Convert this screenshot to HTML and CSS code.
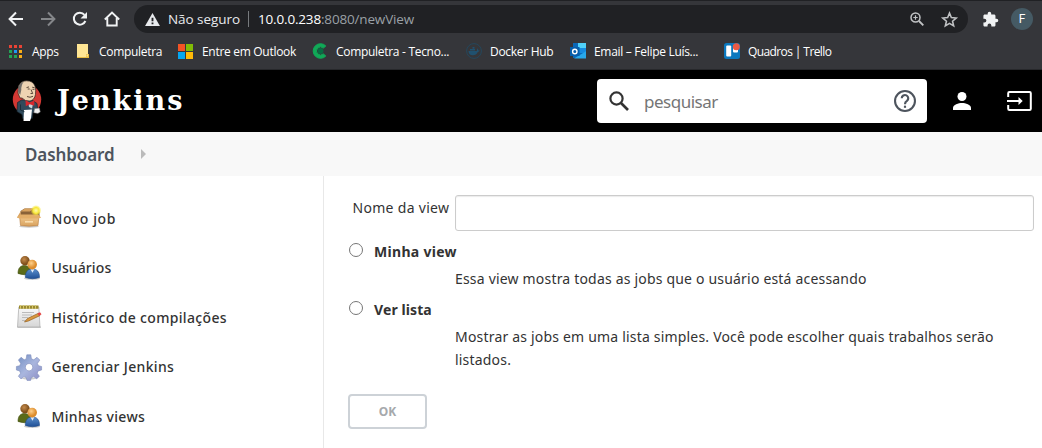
FILE: index.html
```html
<!DOCTYPE html>
<html lang="pt-BR">
<head>
<meta charset="utf-8">
<title>Jenkins</title>
<link rel="stylesheet" href="styles.css">
</head>
<body>
<svg class="defs" width="0" height="0">
  <defs>
    <linearGradient id="box" x1="0" y1="0" x2="0" y2="1"><stop offset="0" stop-color="#f3cb90"/><stop offset="1" stop-color="#d8a25f"/></linearGradient>
    <radialGradient id="sun"><stop offset="0" stop-color="#fffbb0"/><stop offset=".55" stop-color="#f8e83a"/><stop offset="1" stop-color="#f8e83a" stop-opacity="0"/></radialGradient>
    <radialGradient id="face" cx=".4" cy=".35"><stop offset="0" stop-color="#ffd08a"/><stop offset="1" stop-color="#dc8c2c"/></radialGradient>
    <radialGradient id="face2" cx=".4" cy=".35"><stop offset="0" stop-color="#c58b4c"/><stop offset="1" stop-color="#80501c"/></radialGradient>
    <linearGradient id="blue" x1="0" y1="0" x2="0" y2="1"><stop offset="0" stop-color="#5b8fcc"/><stop offset="1" stop-color="#1f4f96"/></linearGradient>
    <linearGradient id="steel" x1="0" y1="0" x2="1" y2="1"><stop offset="0" stop-color="#6f8dc0"/><stop offset=".5" stop-color="#a9b6de"/><stop offset="1" stop-color="#8c8cc4"/></linearGradient>
    <linearGradient id="paper" x1="0" y1="0" x2="0" y2="1"><stop offset="0" stop-color="#fafafa"/><stop offset="1" stop-color="#d6d6d6"/></linearGradient>
    <symbol id="people" viewBox="0 0 26 26">
      <ellipse cx="16" cy="23.500" rx="8" ry="1.300" fill="#ccc"/>
      <path d="M2 18.500c0-5.500 2.500-8 6.500-8s6.500 3 6.500 8q-6.500 2.500-13 0z" fill="#5b6b18" stroke="#3d4b0c" stroke-width=".6"/>
      <circle cx="9" cy="5.800" r="4.700" fill="url(#face2)"/>
      <path d="M9.300 22.500c0-6 2.700-8.500 7.200-8.500s7 2.800 7 8.500q-7 2.600-14.200 0z" fill="url(#blue)" stroke="#204a87" stroke-width=".6"/>
      <path d="M14.500 14.200l2 3.500 1.800-3.500z" fill="#e4eefa"/>
      <circle cx="16.200" cy="9.600" r="4.800" fill="url(#face)"/>
    </symbol>
  </defs>
</svg>

<div class="chrome">
  <div class="toolbar">
    <svg class="nav back" viewBox="0 0 16 16"><path d="M15 8H2M8 1.500L1.600 8 8 14.500" fill="none" stroke="#f1f3f4" stroke-width="2"/></svg>
    <svg class="nav forward" viewBox="0 0 16 16"><path d="M1 8h13M8 1.500L14.400 8 8 14.500" fill="none" stroke="#85878a" stroke-width="2"/></svg>
    <svg class="nav reload" viewBox="0 0 16 16"><path d="M13.400 10a6 6 0 1 1-.9-6.200" fill="none" stroke="#f1f3f4" stroke-width="2"/><path d="M15 1v6.500H8.500z" fill="#f1f3f4"/></svg>
    <svg class="nav home" viewBox="0 0 16 16"><path d="M.8 8.500L8 1.600l7.200 6.900M3.300 7v7.500h9.400V7" fill="none" stroke="#f1f3f4" stroke-width="1.900"/></svg>
    <div class="address">
      <svg class="warn" viewBox="0 0 16 14"><path d="M8 0l8 14H0z" fill="#e8eaed"/><path d="M7 5h2v4H7zM7 10.200h2v2H7z" fill="#202124"/></svg>
      <span class="insecure">Não seguro</span>
      <span class="divider"></span>
      <span class="url"><span class="host">10.0.0.238</span>:8080/newView</span>
      <svg class="magnifier" viewBox="0 0 14 14"><circle cx="5.500" cy="5.500" r="4.500" fill="none" stroke="#c0c2c4" stroke-width="1.500"/><path d="M9 9l4.300 4.300" stroke="#c0c2c4" stroke-width="1.900"/><path d="M3.300 5.500h4.400M5.500 3.300v4.400" stroke="#c0c2c4" stroke-width="1.200"/></svg>
      <svg class="star" viewBox="0 0 24 24"><path d="M12 3l2.600 6.300 6.900.6-5.200 4.500 1.600 6.700L12 17.500l-5.900 3.600 1.600-6.700-5.200-4.500 6.900-.6z" fill="none" stroke="#c0c2c4" stroke-width="2.200"/></svg>
    </div>
    <svg class="puzzle" viewBox="0 0 24 24"><path fill="#f1f3f4" d="M20.500 11H19V7c0-1.100-.9-2-2-2h-4V3.500a2.500 2.500 0 0 0-5 0V5H4c-1.100 0-2 .9-2 2v3.800h1.500a2.700 2.700 0 0 1 0 5.400H2V20c0 1.100.9 2 2 2h3.800v-1.500a2.700 2.700 0 0 1 5.400 0V22H17c1.100 0 2-.9 2-2v-4h1.500a2.500 2.500 0 0 0 0-5z"/></svg>
    <span class="avatar">F</span>
  </div>
  <nav class="bookmarks">
    <a class="bm apps"><svg viewBox="0 0 13 13"><path d="M0 0h3v3H0zM5 0h3v3H5zM10 0h3v3h-3z" fill="#ea4335"/><path d="M0 5h3v3H0zM0 10h3v3H0zM5 10h3v3H5z" fill="#23a455"/><path d="M5 5h3v3H5z" fill="#2196f3"/><path d="M10 5h3v3h-3zM10 10h3v3h-3z" fill="#fbae17"/></svg><span>Apps</span></a>
    <a class="bm folder"><svg viewBox="0 0 12 14"><path d="M0 0h11v10h1v4H0z" fill="#ffe694"/><path d="M0 13h9v-3h3v4H0z" fill="#e8bd43"/><path d="M9.500 10.500H11v2H9.500z" fill="#ffe694"/></svg><span>Compuletra</span></a>
    <a class="bm ms"><svg viewBox="0 0 15 15"><path d="M0 0h7v7H0z" fill="#f35325"/><path d="M8 0h7v7H8z" fill="#81bc06"/><path d="M0 8h7v7H0z" fill="#05a6f0"/><path d="M8 8h7v7H8z" fill="#ffba08"/></svg><span>Entre em Outlook</span></a>
    <a class="bm tecno"><svg viewBox="0 0 16 16"><path d="M13.800 3A7.300 7.300 0 1 0 13.800 13L11.300 10.900A4 4 0 1 1 11.300 5.100z" fill="#10a957" stroke="#10a957" stroke-width="1"/><circle cx="8.500" cy="8" r="3" fill="#096c42"/></svg><span>Compuletra - Tecno...</span></a>
    <a class="bm docker"><svg viewBox="0 0 16 16"><circle cx="8" cy="8" r="7.400" fill="none" stroke="#24475c"/><path d="M2.500 8h8.300q.6-2 .3-2.800 1.300.8 1.300 2.200l1.400.2q-.6 1.200-2 1.300-1.500 3.300-5 3.300-4.200 0-4.300-4.200z" fill="#20516f"/><path d="M4 6h5v1.500H4zM6.500 4h2v1.700h-2z" fill="#20516f"/></svg><span>Docker Hub</span></a>
    <a class="bm mail"><svg viewBox="0 0 16 16"><path d="M3 0h13v15H3z" fill="#0a68b8"/><path d="M8 0h8v5H8z" fill="#50d0f8"/><path d="M8 5h8v5H8z" fill="#168be0"/><path d="M4 15.500l12-7.300v7.300z" fill="#28a8ea"/><path d="M0 4h9.500v9H0z" fill="#075eaa"/><circle cx="4.800" cy="8.500" r="2.200" fill="none" stroke="#fff" stroke-width="1.400"/></svg><span>Email – Felipe Luís...</span></a>
    <a class="bm trello"><svg viewBox="0 0 16 16"><rect width="16" height="16" rx="2.500" fill="#0b78be"/><rect x="2.200" y="2.500" width="5" height="11" rx="1" fill="#fff"/><rect x="9" y="2.500" width="5" height="7" rx="1" fill="#fff"/><circle cx="12.300" cy="3.800" r="3.500" fill="#eb5a46"/></svg><span>Quadros | Trello</span></a>
  </nav>
</div>

<header class="header">
  <svg class="butler" viewBox="0 0 30 42">
    <ellipse cx="15" cy="19.500" rx="14.200" ry="15" fill="#d33833"/>
    <path d="M9.500 20L5.500 22.500 5 31.500l5 3 .7 4h9.500l.8-6 5-.7L25 23.500l-5-3.500z" fill="#304a5b" stroke="#17252e" stroke-width=".7"/>
    <path d="M8 18L6 13 6.500 6Q9 .8 14.500.8 21 .8 23 6q1.200 4 .5 8.500Q22.500 20 18 21q-5 .5-8-3z" fill="#eed3b2" stroke="#28231f" stroke-width=".7"/>
    <path d="M8.200 15L6.200 12 6.700 6Q8.500 2.500 12 1.500 9 5 9.300 10z" fill="#716d69"/>
    <path d="M15.700 9h2M20.500 9.300h2M19 9.500l1.700 4h-2.200M15 16.500q3 1.600 6-.2M14.500 7.600l2.500-.7M20.200 7.200l2.300.5" fill="none" stroke="#4a392d" stroke-width=".9"/>
    <path d="M16.500 24h4.500l-1 4.500-3-1.500z" fill="#c9d3da"/>
    <path d="M13.500 20l4 2.500 4.800-2v5.200l-4.500-1.500-4 2z" fill="#d6262c"/>
    <path d="M12 30l8-.5 -1 8.500-1 3h-6.500z" fill="#fff"/>
    <path d="M22.500 28.500l5-.5.8 4-2.500 1.500-4-.7z" fill="#eee" stroke="#555" stroke-width=".5"/>
    <path d="M8.500 24.500v5.500l4 1.700" fill="none" stroke="#172b37" stroke-width=".9"/>
  </svg>
  <span class="brand">Jenkins</span>
  <div class="search">
    <svg class="lens" viewBox="0 0 20 20"><circle cx="7.500" cy="7.500" r="6.100" fill="none" stroke="#333" stroke-width="2.200"/><path d="M12 12l7 7" stroke="#333" stroke-width="2.600"/></svg>
    <span class="placeholder">pesquisar</span>
    <svg class="help" viewBox="0 0 24 24"><circle cx="12" cy="12" r="9.200" fill="none" stroke="#4d545d" stroke-width="1.900"/><path d="M9 9.500a3 3 0 1 1 4.800 2.400Q12 13 12 15" fill="none" stroke="#4d545d" stroke-width="2"/><path d="M11 16.300h2v2h-2z" fill="#4d545d"/></svg>
  </div>
  <svg class="user" viewBox="0 0 18 18"><circle cx="9" cy="4.500" r="4.500" fill="#fff"/><path d="M0 18v-2.300C0 12.800 5.500 11 9 11s9 1.800 9 4.700V18z" fill="#fff"/></svg>
  <svg class="logout" viewBox="0 0 25 20"><path d="M1.200 6V2.200Q1.200 1 2.400 1h20.200q1.200 0 1.200 1.200v15.600q0 1.200-1.200 1.200H2.400q-1.200 0-1.200-1.200V14" fill="none" stroke="#fff" stroke-width="2"/><path d="M0 10h13" stroke="#fff" stroke-width="2"/><path d="M11.500 6l4.200 4-4.200 4z" fill="#fff"/></svg>
</header>

<div class="crumbs"><span class="crumb">Dashboard</span><span class="caret"></span></div>

<div class="content">
  <aside class="side">
    <a class="task"><svg viewBox="0 0 26 26"><ellipse cx="13" cy="21.500" rx="10" ry="1.200" fill="#ccc"/><path d="M4.500 6l4-2.500h12l3 3.500v5H4z" fill="#8a6238"/><path d="M4.500 6.500l-3.500 6h4zM4.500 6.500L9 3.500h8l-3 3z" fill="#d8a25f"/><path d="M3.500 10.500h19.500l-1 10q-9 1.400-17.500 0z" fill="url(#box)" stroke="#b5793a" stroke-width=".6"/><path d="M.8 12.500l3.500-3h17.500l3.400 3-2.800 1H3.500z" fill="#e3ae69"/><path d="M9 16.800h8" stroke="#fae0b2" stroke-width="1.500"/><circle cx="20" cy="5.500" r="5.500" fill="url(#sun)"/></svg><span class="wide">Novo job</span></a>
    <a class="task"><svg><use href="#people"/></svg><span class="snug">Usuários</span></a>
    <a class="task"><svg viewBox="0 0 26 26"><path d="M2 22.500h23v1.500H1z" fill="#ccc"/><path d="M2.800 3h20l1.200 20H1.500z" fill="url(#paper)" stroke="#aaa" stroke-width=".7"/><path d="M3 1.500h19.500v3.300H3z" fill="#9a8a2e"/><path d="M4.500 1v4M7.500 1v4M10.500 1v4M13.500 1v4M16.500 1v4M19.500 1v4" stroke="#d5c66c"/><path d="M6 8.500h12M6 11h10M6 13.500h6M6 16.500h4" stroke="#bbb"/><path d="M8.500 18l3-3.500L22.500 9.200l1.300 2.500L12.500 17z" fill="#d9983f" stroke="#865313" stroke-width=".6"/><path d="M21.500 9.500l2.500-1.200 1.500 2-2.300 1.700z" fill="#e34545"/></svg><span>Histórico de compilações</span></a>
    <a class="task"><svg viewBox="0 0 26 26"><ellipse cx="13" cy="24.300" rx="7" ry="1.200" fill="#ccc"/><path d="M10.800.8h4l.6 4 2.400 1 3.200-2.500 2.800 2.800-2.400 3.300 1 2.300 3.200.8v3.500l-3.400.9-1 2.300 2.200 3-2.700 2.700-3-2.300-2.400 1-.7 2.800h-3.600l-.7-2.800-2.300-1-3 2.300-2.600-2.700 2.200-3-1-2.300-3.200-.9v-3.500l3.300-.8 1-2.300-2.300-3.300L5.100 3.300 8.200 5.800l2-.9zM13 9.500a3.700 3.700 0 1 0 .1 0z" fill-rule="evenodd" fill="url(#steel)" stroke="#7e8cba" stroke-width=".6"/></svg><span>Gerenciar Jenkins</span></a>
    <a class="task"><svg><use href="#people"/></svg><span>Minhas views</span></a>
  </aside>
  <main class="main">
    <div class="name-row"><label class="name-label">Nome da view</label><input class="name-input" type="text"></div>
    <div class="option"><span class="radio"></span><b>Minha view</b></div>
    <p class="desc">Essa view mostra todas as jobs que o usuário está acessando</p>
    <div class="option second"><span class="radio"></span><b class="plain">Ver lista</b></div>
    <p class="desc">Mostrar as jobs em uma lista simples. Você pode escolher quais trabalhos serão<br>listados.</p>
    <button class="ok">OK</button>
  </main>
</div>
</body>
</html>
```
FILE: styles.css
```css
* { box-sizing: border-box; }
body { margin: 0; width: 1042px; height: 448px; overflow: hidden; background: #fff; color: #333; font-family: "Noto Sans", sans-serif; font-size: 14px; }
svg { display: block; flex: none; overflow: visible; }
span { white-space: nowrap; }
.defs { position: absolute; }

.chrome { height: 70px; background: #35363a; border-top: 1px solid #202124; border-bottom: 1px solid #27282b; font-family: "Open Sans", sans-serif; color: #fff; }
.toolbar { display: flex; align-items: center; height: 36px; padding-left: 8px; }
.nav { width: 16px; height: 16px; margin-right: 16px; }
.home { margin-right: 14px; }
.address { display: flex; align-items: center; width: 834px; height: 28px; padding-left: 11px; border-radius: 14px; background: #202124; font-size: 14px; }
.warn { width: 15px; height: 13px; }
.insecure { margin-left: 8px; width: 72px; color: #e8eaed; font-size: 13.500px; letter-spacing: -.05px; }
.divider { width: 1px; height: 16px; margin: 0 9px 0 8px; background: #777a7d; }
.url { color: #9aa0a6; font-size: 13.500px; letter-spacing: -.17px; flex: 1; }
.host { color: #fff; }
.magnifier { width: 14px; height: 14px; margin-right: 17px; }
.star { width: 17px; height: 17px; margin-right: 10px; }
.puzzle { width: 17px; height: 17px; margin: 0 12px 0 14px; }
.avatar { width: 22px; height: 22px; border-radius: 50%; background: #455a64; line-height: 22px; text-align: center; font-family: Roboto, sans-serif; font-size: 12px; }
.bookmarks { display: flex; height: 28px; font-size: 12px; letter-spacing: -.3px; }
.bm { display: flex; align-items: center; flex: none; gap: 8px; padding-left: 8px; }
.bm svg { width: 16px; height: 16px; }
.apps { width: 68px; padding-left: 9px; gap: 10px; }
.apps svg { width: 13px; height: 13px; }
.folder { width: 101px; padding-left: 9px; gap: 10px; }
.folder svg { width: 12px; height: 14px; }
.ms { width: 134px; padding-left: 9px; gap: 9px; }
.ms svg { width: 15px; height: 15px; }
.tecno { width: 155px; padding-left: 9px; }
.docker { width: 104px; }
.mail { width: 154px; }
.trello { letter-spacing: -.6px; }

.header { display: flex; align-items: center; height: 62px; padding-left: 12px; background: #000; }
.butler { width: 30px; height: 42px; }
.brand { margin: -2px 0 0 15px; color: #fff; font: bold 27px "DejaVu Serif", serif; letter-spacing: 2px; }
.search { display: flex; align-items: center; width: 330px; height: 44px; margin-left: auto; padding-left: 12px; border-radius: 4px; background: #fff; }
.lens { width: 20px; height: 20px; }
.placeholder { flex: 1; margin-left: 15px; color: #757575; font-size: 17px; letter-spacing: -.5px; }
.help { width: 26px; height: 26px; margin-right: 9px; }
.user { width: 18px; height: 18px; margin: 0 36px 0 26px; }
.logout { width: 25px; height: 20px; margin-right: 10px; }

.crumbs { display: flex; align-items: center; height: 44px; padding-left: 25px; background: #f8f8f8; }
.crumb { width: 90px; color: #4d545d; font-weight: 600; font-size: 17px; letter-spacing: -.1px; }
.caret { margin-left: 26px; border-left: 5px solid #bbb; border-top: 5px solid transparent; border-bottom: 5px solid transparent; }

.content { display: flex; height: 272px; }
.side { width: 324px; padding: 17.500px 0 0 16px; border-right: 1px solid #e8e8e8; }
.task { display: flex; align-items: center; gap: 9.500px; height: 49.500px; font-weight: 500; letter-spacing: .34px; }
.task svg { width: 26px; height: 26px; }
.wide { letter-spacing: .6px; }
.snug { letter-spacing: .1px; }
.main { flex: 1; padding: 19px 8px 0 24px; }
.name-row { display: flex; }
.name-label { width: 107px; padding: 3px 0 0 4.500px; line-height: 20px; letter-spacing: .3px; white-space: nowrap; }
.name-input { width: 579px; height: 36px; border: 1px solid #ccc; border-radius: 3px; box-shadow: inset 0 1px 1px rgba(0,0,0,.08); outline: none; background: #fff; }
.option { display: flex; height: 24px; margin-top: 9px; line-height: 24px; }
.option.second { margin-top: 8px; }
.radio { width: 14px; height: 14px; margin: 3px 11px 0 1px; border: 1px solid #767676; border-radius: 50%; }
.desc { margin: 3px 0 0 107px; line-height: 23px; letter-spacing: .19px; white-space: nowrap; }
.option b { font-weight: 700; letter-spacing: .3px; }
.option .plain { letter-spacing: .1px; }
.ok { display: block; width: 79px; height: 35px; margin-top: 23px; padding: 0; border: 2px solid #cdd2d7; border-radius: 4px; background: #fff; color: #a6a9ac; font: 700 12px "Noto Sans", sans-serif; }
```
